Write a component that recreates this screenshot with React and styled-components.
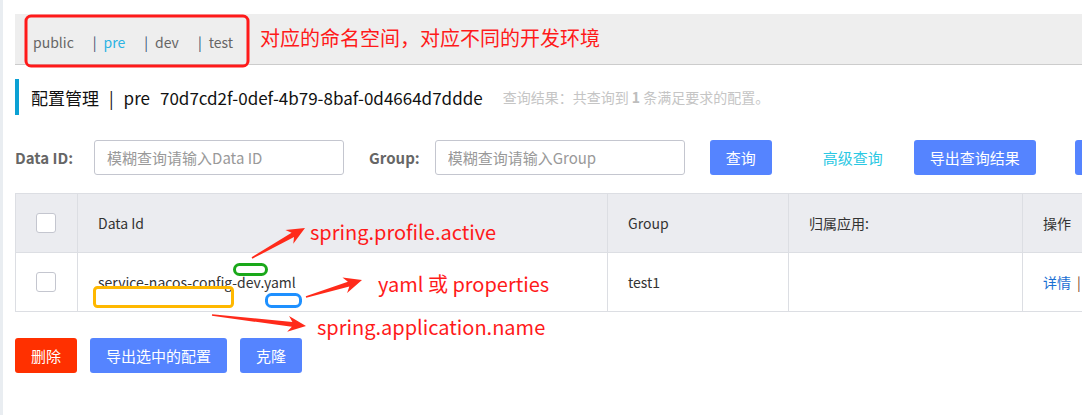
import React from "react";
import styled, { createGlobalStyle } from "styled-components";

const GlobalStyle = createGlobalStyle`
  html, body {
    margin: 0;
    padding: 0;
    background: #fff;
    font-family: "Noto Sans CJK SC", "Noto Sans", sans-serif;
    font-size: 14px;
    color: #333;
    overflow: hidden;
  }
`;

const namespaces = [
  { name: "public" },
  { name: "pre", active: true },
  { name: "dev" },
  { name: "test" },
];

const columns = [
  { title: "", width: 62 },
  { title: "Data Id", width: 530 },
  { title: "Group", width: 181 },
  { title: "归属应用:", width: 234 },
  { title: "操作", width: 120 },
];

const rows = [
  { dataId: "service-nacos-config-dev.yaml", group: "test1", app: "" },
];

const App = () => (
  <Page>
    <GlobalStyle />
    <Content>
      <NamespaceBar>
        {namespaces.map((ns, i) => (
          <NamespaceItem key={ns.name} active={ns.active}>
            {i > 0 && <Separator>|</Separator>}
            {ns.name}
          </NamespaceItem>
        ))}
      </NamespaceBar>

      <TitleRow>
        <TitleText>配置管理</TitleText>
        <TitleSep>|</TitleSep>
        <TitleText>pre</TitleText>
        <TitleId>70d7cd2f-0def-4b79-8baf-0d4664d7ddde</TitleId>
        <ResultText>
          查询结果：共查询到 <strong>1</strong> 条满足要求的配置。
        </ResultText>
      </TitleRow>

      <FilterRow>
        <Label>Data ID:</Label>
        <Input placeholder="模糊查询请输入Data ID" />
        <Label second>Group:</Label>
        <Input placeholder="模糊查询请输入Group" />
        <Button>查询</Button>
        <LinkButton>高级查询</LinkButton>
        <Button>导出查询结果</Button>
        <Button wide>导入配置</Button>
      </FilterRow>

      <Table>
        <colgroup>
          {columns.map((c, i) => (
            <col key={i} style={{ width: c.width }} />
          ))}
        </colgroup>
        <thead>
          <tr>
            {columns.map((c, i) => (
              <Th key={i}>{i === 0 ? <Checkbox /> : c.title}</Th>
            ))}
          </tr>
        </thead>
        <tbody>
          {rows.map((r) => (
            <tr key={r.dataId}>
              <Td><Checkbox /></Td>
              <Td>{r.dataId}</Td>
              <Td>{r.group}</Td>
              <Td>{r.app}</Td>
              <Td>
                <ActionLink>详情</ActionLink>
                <ActionSep>|</ActionSep>
              </Td>
            </tr>
          ))}
        </tbody>
      </Table>

      <BottomRow>
        <Button danger>删除</Button>
        <Button>导出选中的配置</Button>
        <Button>克隆</Button>
      </BottomRow>
    </Content>

    <Annotations>
      <svg width="1082" height="415" viewBox="0 0 1082 415">
        <rect x="26" y="16" width="222" height="50" rx="5" fill="none" stroke="#ff1a1a" strokeWidth="3" />
        <rect x="234.5" y="264.5" width="32" height="10" rx="5" fill="none" stroke="#1aa81a" strokeWidth="3" />
        <rect x="94.5" y="287.5" width="138" height="19" rx="3" fill="none" stroke="#ffb800" strokeWidth="3" />
        <rect x="266.5" y="294.5" width="34" height="12" rx="5" fill="none" stroke="#1e90ff" strokeWidth="3" />
        <Arrow x1={252} y1={258} x2={305} y2={228} />
        <Arrow x1={306} y1={297} x2={362} y2={280} />
        <Arrow x1={212} y1={315} x2={306} y2={326} />
      </svg>
      <Note left={260} top={24}>对应的命名空间，对应不同的开发环境</Note>
      <Note left={310} top={218}>spring.profile.active</Note>
      <Note left={378} top={270}>yaml 或 properties</Note>
      <Note left={317} top={313}>spring.application.name</Note>
    </Annotations>
  </Page>
);

// a red arrow drawn as a tapering body with a notched head
const Arrow = ({ x1, y1, x2, y2 }) => {
  const dx = x2 - x1;
  const dy = y2 - y1;
  const len = Math.hypot(dx, dy);
  const ux = dx / len;
  const uy = dy / len;
  const nx = -uy;
  const ny = ux;
  const head = 18;
  const bx = x2 - ux * head;
  const by = y2 - uy * head;
  const pts = [
    [x1 + nx * 0.8, y1 + ny * 0.8],
    [bx + ux * 4 + nx * 2.5, by + uy * 4 + ny * 2.5],
    [bx + nx * 8, by + ny * 8],
    [x2, y2],
    [bx - nx * 8, by - ny * 8],
    [bx + ux * 4 - nx * 2.5, by + uy * 4 - ny * 2.5],
    [x1 - nx * 0.8, y1 - ny * 0.8],
  ];
  return <polygon points={pts.map((p) => p.join(",")).join(" ")} fill="#ff2a1a" />;
};

const Page = styled.div`
  position: relative;
  width: 1082px;
  height: 415px;
  overflow: hidden;
  box-sizing: border-box;
  border-left: 3px solid #e9edf1;
`;

const Content = styled.div`
  padding: 14px 0 0 12px;
`;

const NamespaceBar = styled.div`
  display: flex;
  align-items: center;
  box-sizing: border-box;
  height: 51px;
  padding: 6px 0 0 18px;
  background: #eeeeee;
  border-bottom: 1px solid #cccccc;
`;

const NamespaceItem = styled.span`
  display: inline-flex;
  align-items: center;
  margin-right: 19px;
  font-size: 14px;
  color: ${(p) => (p.active ? "#2cb3e3" : "#666")};
`;

const Separator = styled.span`
  color: #34506e;
  margin-right: 7px;
`;

const TitleRow = styled.div`
  display: flex;
  align-items: center;
  margin-top: 14px;
  height: 36px;
  border-left: 4px solid #0ba1d4;
  padding-left: 12px;
  white-space: nowrap;
`;

const TitleText = styled.span`
  font-size: 17px;
  color: #111;
`;

const TitleSep = styled.span`
  font-size: 17px;
  color: #111;
  margin: 0 10px;
`;

const TitleId = styled.span`
  font-size: 17px;
  color: #111;
  margin-left: 10px;
`;

const ResultText = styled.span`
  margin-left: 20px;
  font-size: 14px;
  color: #c5c5c5;

  strong {
    color: #bdbdbd;
    font-weight: bold;
  }
`;

const FilterRow = styled.div`
  display: flex;
  align-items: center;
  margin-top: 25px;
  height: 35px;
  white-space: nowrap;
`;

const Label = styled.span`
  flex-shrink: 0;
  font-weight: bold;
  font-size: 15px;
  color: #666;
  margin: ${(p) => (p.second ? "0 15px 0 25px" : "0 21px 0 0")};
`;

const Input = styled.input`
  flex-shrink: 0;
  box-sizing: border-box;
  width: 250px;
  height: 35px;
  padding: 0 12px;
  border: 1px solid #c4c6cf;
  border-radius: 3px;
  font-family: inherit;
  font-size: 15px;
  outline: none;

  &::placeholder {
    color: #999;
  }
`;

const Button = styled.button`
  box-sizing: border-box;
  flex-shrink: 0;
  height: 35px;
  padding: 0 16px;
  border: none;
  border-radius: 3px;
  background: ${(p) => (p.danger ? "#ff3000" : "#5584ff")};
  color: #fff;
  font-family: inherit;
  font-size: 15px;
  cursor: pointer;

  ${FilterRow} & {
    margin-left: ${(p) => (p.wide ? "39px" : "25px")};
  }
`;

const LinkButton = styled.span`
  flex-shrink: 0;
  margin: 0 6px 0 51px;
  color: #2bc8e3;
  font-size: 15px;
`;

const Table = styled.table`
  margin-top: 18px;
  border-collapse: collapse;
  table-layout: fixed;
  width: 1127px;
  font-size: 14px;
`;

const Th = styled.th`
  height: 58px;
  padding: 0 20px;
  text-align: left;
  font-weight: normal;
  color: #333;
  background: #ebecf0;
  border: 1px solid #dcdee3;
`;

const Td = styled.td`
  height: 58px;
  padding: 0 20px;
  color: #333;
  border: 1px solid #dcdee3;
  white-space: nowrap;
`;

const Checkbox = styled.span`
  display: block;
  box-sizing: border-box;
  width: 20px;
  height: 20px;
  border: 1px solid #c4c6cf;
  border-radius: 3px;
  background: #fff;
`;

const ActionLink = styled.span`
  color: #1a6fd3;
`;

const ActionSep = styled.span`
  margin-left: 6px;
  color: #7a3b1c;
`;

const BottomRow = styled.div`
  display: flex;
  gap: 13px;
  margin-top: 26px;
`;

const Annotations = styled.div`
  position: absolute;
  inset: 0;
  pointer-events: none;

  svg {
    position: absolute;
    left: -3px;
    top: 0;
  }
`;

const Note = styled.span`
  position: absolute;
  left: ${(p) => p.left - 3}px;
  top: ${(p) => p.top}px;
  font-size: 20px;
  line-height: 28px;
  color: #ff1a1a;
  white-space: nowrap;
`;

export default App;
